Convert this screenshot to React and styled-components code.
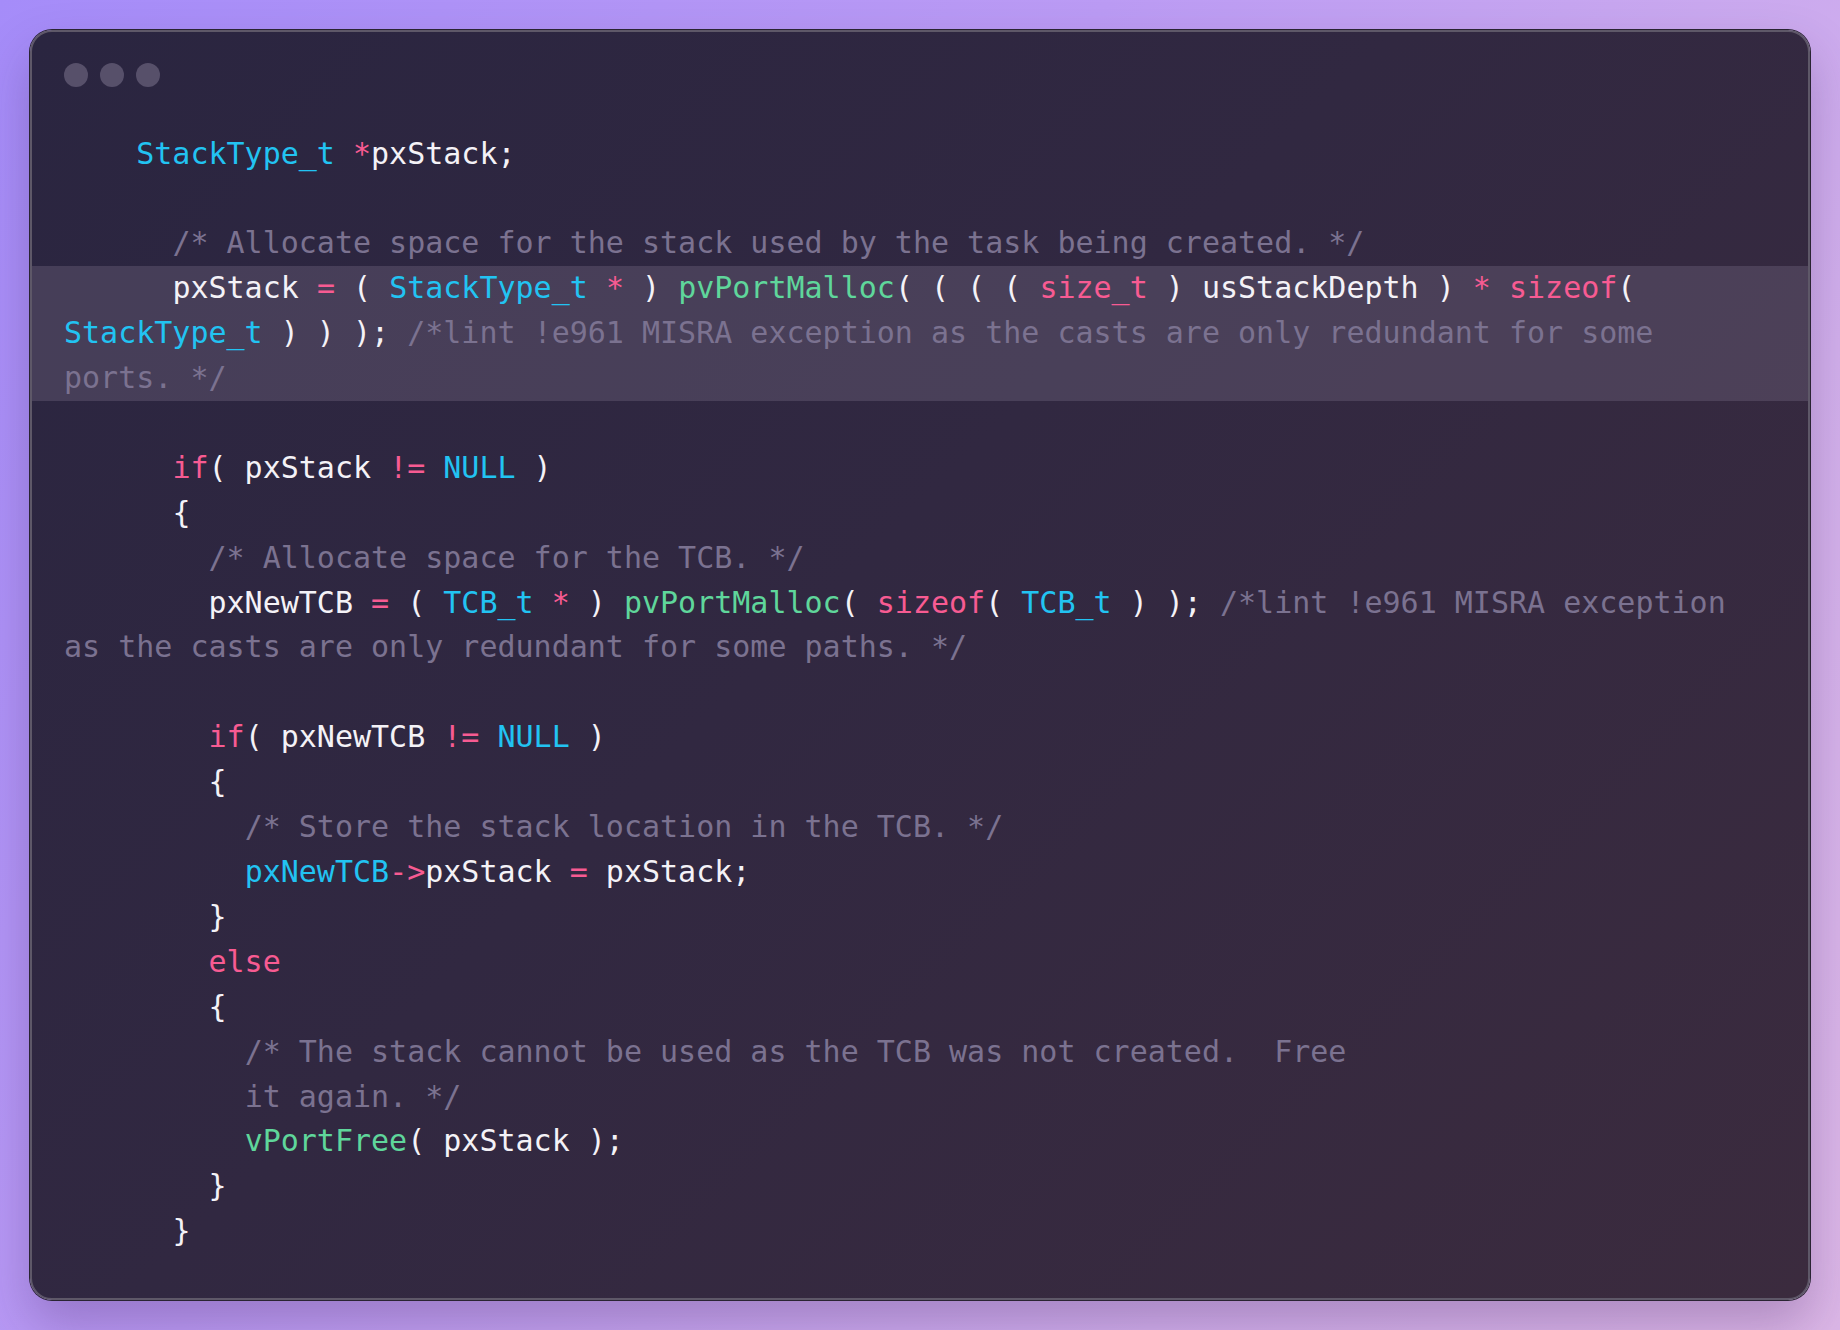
import React from 'react'
import styled, { createGlobalStyle } from 'styled-components'

const GlobalStyle = createGlobalStyle`
  html, body {
    margin: 0;
    padding: 0;
  }
  body {
    font-family: 'DejaVu Sans Mono', monospace;
  }
`

const colors = {
  plain: '#f4f2f7',
  type: '#22c3f2',
  keyword: '#f75b92',
  func: '#5fd69b',
  comment: '#7b7290',
}

// each line: [indent, [[kind, text], ...], highlighted]
const code = [
  [4, [['type', 'StackType_t'], ['plain', ' '], ['keyword', '*'], ['plain', 'pxStack;']]],
  [0, []],
  [6, [['comment', '/* Allocate space for the stack used by the task being created. */']]],
  [6, [
    ['plain', 'pxStack '], ['keyword', '='], ['plain', ' ( '], ['type', 'StackType_t'], ['plain', ' '],
    ['keyword', '*'], ['plain', ' ) '], ['func', 'pvPortMalloc'], ['plain', '( ( ( ( '], ['keyword', 'size_t'],
    ['plain', ' ) usStackDepth ) '], ['keyword', '*'], ['plain', ' '], ['keyword', 'sizeof'], ['plain', '(\n'],
    ['type', 'StackType_t'], ['plain', ' ) ) ); '],
    ['comment', '/*lint !e961 MISRA exception as the casts are only redundant for some\nports. */'],
  ], true],
  [0, []],
  [6, [['keyword', 'if'], ['plain', '( pxStack '], ['keyword', '!='], ['plain', ' '], ['type', 'NULL'], ['plain', ' )']]],
  [6, [['plain', '{']]],
  [8, [['comment', '/* Allocate space for the TCB. */']]],
  [8, [
    ['plain', 'pxNewTCB '], ['keyword', '='], ['plain', ' ( '], ['type', 'TCB_t'], ['plain', ' '], ['keyword', '*'],
    ['plain', ' ) '], ['func', 'pvPortMalloc'], ['plain', '( '], ['keyword', 'sizeof'], ['plain', '( '],
    ['type', 'TCB_t'], ['plain', ' ) ); '],
    ['comment', '/*lint !e961 MISRA exception\nas the casts are only redundant for some paths. */'],
  ]],
  [0, []],
  [8, [['keyword', 'if'], ['plain', '( pxNewTCB '], ['keyword', '!='], ['plain', ' '], ['type', 'NULL'], ['plain', ' )']]],
  [8, [['plain', '{']]],
  [10, [['comment', '/* Store the stack location in the TCB. */']]],
  [10, [['type', 'pxNewTCB'], ['keyword', '->'], ['plain', 'pxStack '], ['keyword', '='], ['plain', ' pxStack;']]],
  [8, [['plain', '}']]],
  [8, [['keyword', 'else']]],
  [8, [['plain', '{']]],
  [10, [['comment', '/* The stack cannot be used as the TCB was not created.  Free']]],
  [10, [['comment', 'it again. */']]],
  [10, [['func', 'vPortFree'], ['plain', '( pxStack );']]],
  [8, [['plain', '}']]],
  [6, [['plain', '}']]],
]

const App = () => {
  return (
    <>
      <GlobalStyle />
      <Backdrop>
        <Window>
          <TitleBar>
            <Dot />
            <Dot />
            <Dot />
          </TitleBar>
          <Code>
            {code.map(([indent, tokens, highlighted], i) => (
              <Line key={i} $highlighted={highlighted}>
                {' '.repeat(indent)}
                {tokens.map(([kind, text], j) => (
                  <Token key={j} $kind={kind}>{text}</Token>
                ))}
                {tokens.length === 0 ? ' ' : null}
              </Line>
            ))}
          </Code>
        </Window>
      </Backdrop>
    </>
  )
}

export default App

const Backdrop = styled.div`
  width: 1840px;
  height: 1330px;
  box-sizing: border-box;
  padding: 30px;
  background: linear-gradient(125deg, #a58cf9 0%, #bb9bf4 40%, #d2b0ec 75%, #dcb7e7 100%);
  overflow: hidden;
`
const Window = styled.div`
  width: 100%;
  height: 100%;
  box-sizing: border-box;
  border-radius: 22px;
  border: 2px solid #5e5868;
  box-shadow: 0 0 0 1px #2a2433, 0 24px 50px rgba(60, 30, 90, 0.28);
  background: linear-gradient(135deg, #2a2540 0%, #312841 45%, #3b2b3e 100%);
  overflow: hidden;
`
const TitleBar = styled.div`
  display: flex;
  gap: 12px;
  padding: 31px 0 0 32px;
`
const Dot = styled.span`
  width: 24px;
  height: 24px;
  border-radius: 50%;
  background: #57506a;
`
const Code = styled.pre`
  margin: 44.5px 0 0;
  font-family: 'DejaVu Sans Mono', 'Liberation Mono', monospace;
  font-size: 30px;
  line-height: 44.9px;
  color: ${colors.plain};
`
const Line = styled.div`
  white-space: pre;
  padding-left: 32px;
  background: ${p => (p.$highlighted ? 'rgba(120, 110, 135, 0.35)' : 'transparent')};
`
const Token = styled.span`
  color: ${p => colors[p.$kind]};
`
